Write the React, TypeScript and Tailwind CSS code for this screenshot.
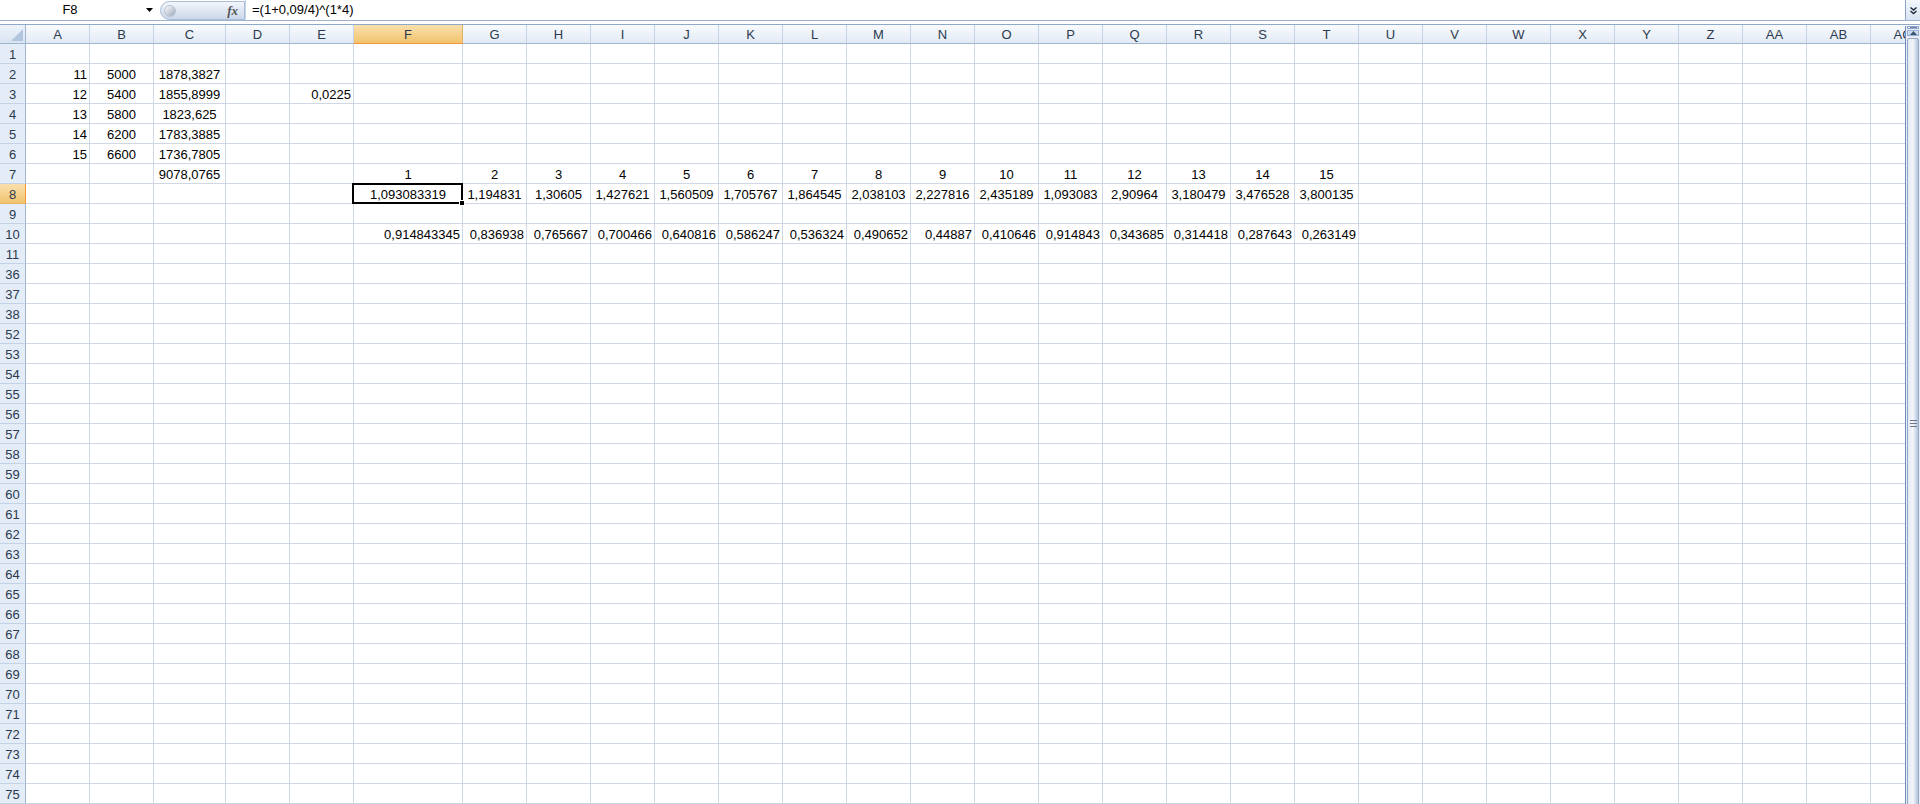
import React from 'react'

type Align = 'l' | 'c' | 'r'
type Cell = [string, Align]

const COLS: [string, number][] = [
  ['A', 64], ['B', 64], ['C', 72], ['D', 64], ['E', 64], ['F', 109],
  ['G', 64], ['H', 64], ['I', 64], ['J', 64], ['K', 64], ['L', 64], ['M', 64],
  ['N', 64], ['O', 64], ['P', 64], ['Q', 64], ['R', 64], ['S', 64], ['T', 64],
  ['U', 64], ['V', 64], ['W', 64], ['X', 64], ['Y', 64], ['Z', 64],
  ['AA', 64], ['AB', 64], ['AC', 64],
]

const ROWS = [1, 2, 3, 4, 5, 6, 7, 8, 9, 10, 11, 36, 37, 38]
for (let r = 52; r <= 75; r++) ROWS.push(r)

const series = ['F', 'G', 'H', 'I', 'J', 'K', 'L', 'M', 'N', 'O', 'P', 'Q', 'R', 'S', 'T']

const row8 = [
  '1,093083319', '1,194831', '1,30605', '1,427621', '1,560509', '1,705767', '1,864545', '2,038103',
  '2,227816', '2,435189', '1,093083', '2,90964', '3,180479', '3,476528', '3,800135',
]
const row10 = [
  '0,914843345', '0,836938', '0,765667', '0,700466', '0,640816', '0,586247', '0,536324', '0,490652',
  '0,44887', '0,410646', '0,914843', '0,343685', '0,314418', '0,287643', '0,263149',
]

const data: Record<number, Record<string, Cell>> = {
  2: { A: ['11', 'r'], B: ['5000', 'c'], C: ['1878,3827', 'c'] },
  3: { A: ['12', 'r'], B: ['5400', 'c'], C: ['1855,8999', 'c'], E: ['0,0225', 'r'] },
  4: { A: ['13', 'r'], B: ['5800', 'c'], C: ['1823,625', 'c'] },
  5: { A: ['14', 'r'], B: ['6200', 'c'], C: ['1783,3885', 'c'] },
  6: { A: ['15', 'r'], B: ['6600', 'c'], C: ['1736,7805', 'c'] },
  7: { C: ['9078,0765', 'c'] },
  8: {},
  10: {},
}
series.forEach((col, i) => {
  data[7][col] = [String(i + 1), 'c']
  data[8][col] = [row8[i], 'c']
  data[10][col] = [row10[i], 'r']
})

const alignClass: Record<Align, string> = {
  l: 'justify-start pl-[2px]',
  c: 'justify-center',
  r: 'justify-end pr-[2px]',
}

function FormulaBar() {
  return (
    <div className="h-[21px] flex border-b border-[#9db4d2] bg-white shrink-0">
      <div className="w-[140px] flex items-center justify-center">F8</div>
      <div className="w-[18px] flex items-center justify-center">
        <svg width="7" height="4" viewBox="0 0 7 4">
          <path d="M0 0h7L3.5 4z" fill="#000" />
        </svg>
      </div>
      <div className="w-[2px]" />
      <div className="w-[85px] h-[19px] mt-[1px] rounded-l-full border border-[#a9bdd8] bg-linear-to-b from-[#f3f6fb] to-[#cbd8ea] flex items-center pl-[3px] pr-[6px]">
        <div className="w-[12px] h-[12px] rounded-full bg-linear-to-br from-[#ffffff] to-[#9ba8b9] border border-[#b9c4d2]" />
        <div className="flex-1" />
        <span className="font-['Liberation_Serif',serif] italic font-bold text-[13px] text-[#555] leading-none">
          fx
        </span>
      </div>
      <div className="flex-1 flex items-center pl-[6px] border-l border-[#c8d5e6]">
        =(1+0,09/4)^(1*4)
      </div>
      <div className="w-[15px] h-[20px] border-l border-[#8ba6ca] bg-linear-to-b from-[#f4f8fd] to-[#d8e3f2] flex items-center justify-center">
        <svg width="9" height="9" viewBox="0 0 9 9">
          <path d="M1.5 1.5l3 2.5 3-2.5M1.5 5l3 2.5 3-2.5" stroke="#1e2a3a" strokeWidth="1.4" fill="none" />
        </svg>
      </div>
    </div>
  )
}

function Scrollbar() {
  return (
    <div className="w-[15px] shrink-0 flex flex-col overflow-hidden border-l border-[#6c8cc2] bg-[#e6edf7] mt-[1px]">
      <div className="h-[7px] mx-[1px] border border-[#8ca5c9] bg-[#f3f6fb] flex items-center justify-center">
        <div className="w-[7px] h-px bg-[#6f86a8]" />
      </div>
      <div className="h-[17px] mx-[1px] mt-[1px] border border-[#9ab1d2] bg-linear-to-b from-[#d6e2f2] to-[#b9cbe4] flex items-center justify-center">
        <svg width="7" height="4" viewBox="0 0 7 4">
          <path d="M0 4h7L3.5 0z" fill="#3c5475" />
        </svg>
      </div>
      <div className="h-[770px] shrink-0 mt-[2px] mx-[1px] rounded-[2px] border border-[#95a9c6] bg-linear-to-r from-[#e2e9f3] via-[#f4f7fb] to-[#b3c4dc] flex flex-col items-center justify-center gap-[2px]">
        <div className="w-[7px] h-px bg-[#6d7787]" />
        <div className="w-[7px] h-px bg-[#6d7787]" />
        <div className="w-[7px] h-px bg-[#6d7787]" />
      </div>
    </div>
  )
}

export default function App() {
  return (
    <div className="w-[1920px] h-[804px] overflow-hidden bg-white flex flex-col font-['Liberation_Sans',Arial,sans-serif] text-[13px] text-black">
      <FormulaBar />
      <div className="h-[3px] bg-white shrink-0" />
      <div className="flex flex-1 min-h-0 border-t border-[#8fa9cd]">
        <div className="flex-1 min-w-0 overflow-hidden">
          <div className="grid w-max grid-cols-[26px_64px_64px_72px_64px_64px_109px_repeat(23,64px)]">
            {/* header row */}
            <div className="h-[19px] border-r border-b border-[#9eb6ce] bg-linear-to-b from-[#eef3fa] to-[#d9e4f2] relative">
              <svg className="absolute right-[2px] bottom-[2px]" width="12" height="12" viewBox="0 0 12 12">
                <path d="M12 0V12H0z" fill="#b3c5de" />
              </svg>
            </div>
            {COLS.map(([name]) => (
              <div
                key={name}
                className={
                  name === 'F'
                    ? 'h-[19px] border-r border-b border-r-[#e2b36a] border-b-[#f29536] bg-linear-to-b from-[#fae0ad] to-[#f2c46c] flex items-center justify-center pt-[2px] text-[#2b3a4f]'
                    : 'h-[19px] border-r border-b border-r-[#c3d2e4] border-b-[#9eb6ce] bg-linear-to-b from-[#f9fbfd] to-[#e2eaf5] flex items-center justify-center pt-[2px] text-[#2b3a4f]'
                }
              >
                {name}
              </div>
            ))}
            {ROWS.map((r) => (
              <React.Fragment key={r}>
                <div
                  className={
                    r === 8
                      ? 'h-[20px] border-r border-b border-r-[#f29536] border-b-[#e2b36a] bg-linear-to-b from-[#fae0ad] to-[#f2c46c] flex items-center justify-center pt-[2px] text-[#2b3a4f]'
                      : 'h-[20px] border-r border-b border-r-[#9eb6ce] border-b-[#c3d2e4] bg-[#e4ecf7] flex items-center justify-center pt-[2px] text-[#2b3a4f]'
                  }
                >
                  {r}
                </div>
                {COLS.map(([name]) => {
                  const cell = data[r]?.[name]
                  const selected = r === 8 && name === 'F'
                  return (
                    <div
                      key={name}
                      className={`h-[20px] border-r border-b border-[#d0d7e5] flex items-center pt-[2px] whitespace-nowrap ${
                        selected ? 'relative z-10' : ''
                      } ${cell ? alignClass[cell[1]] : ''}`}
                    >
                      {cell ? cell[0] : null}
                      {selected && (
                        <>
                          <div className="absolute -left-[2px] -top-[1px] -right-[1px] -bottom-[1px] border-2 border-black" />
                          <div className="absolute -right-[3px] -bottom-[3px] w-[6px] h-[6px] bg-black border border-white" />
                        </>
                      )}
                    </div>
                  )
                })}
              </React.Fragment>
            ))}
          </div>
        </div>
        <Scrollbar />
      </div>
    </div>
  )
}
